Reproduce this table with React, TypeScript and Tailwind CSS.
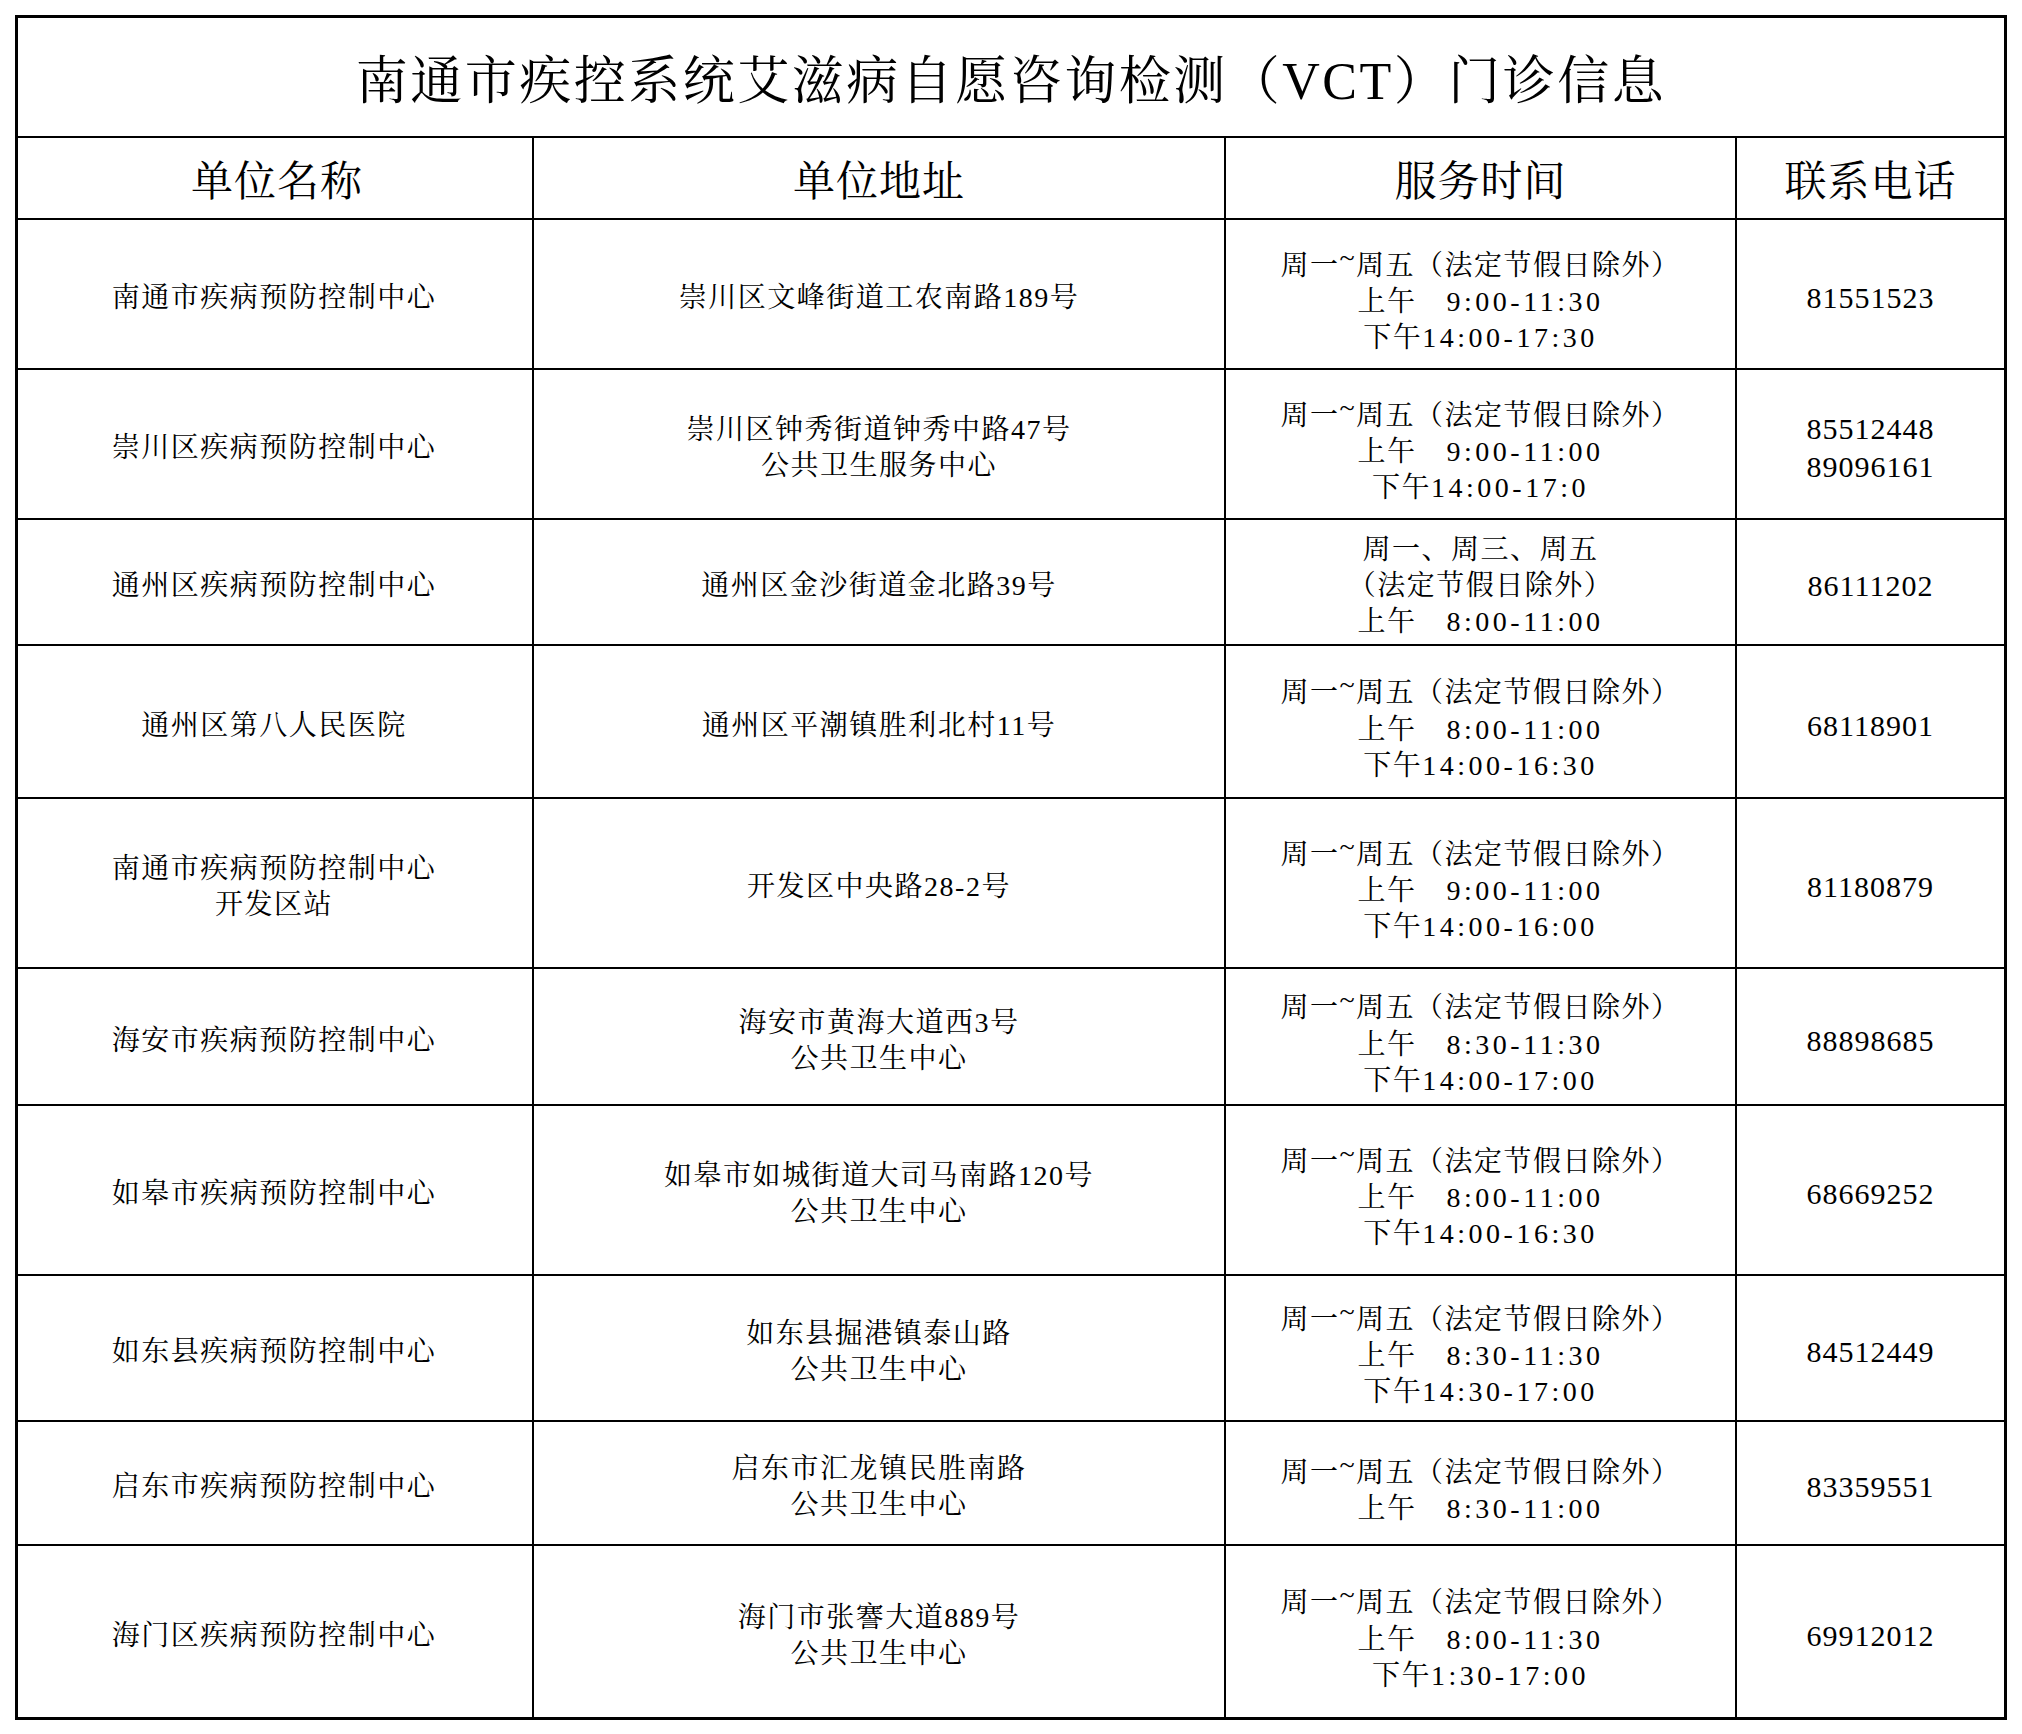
import React from "react";

type Row = {
  name: string[];
  addr: string[];
  days?: string[];
  am: string;
  pm?: string;
  phone: string[];
  h: string;
  last?: boolean;
};

const rows: Row[] = [
  { name: ["南通市疾病预防控制中心"], addr: ["崇川区文峰街道工农南路189号"], am: "9:00-11:30", pm: "14:00-17:30", phone: ["81551523"], h: "h-[150px]" },
  { name: ["崇川区疾病预防控制中心"], addr: ["崇川区钟秀街道钟秀中路47号", "公共卫生服务中心"], am: "9:00-11:00", pm: "14:00-17:0", phone: ["85512448", "89096161"], h: "h-[150px]" },
  { name: ["通州区疾病预防控制中心"], addr: ["通州区金沙街道金北路39号"], days: ["周一、周三、周五", "（法定节假日除外）"], am: "8:00-11:00", phone: ["86111202"], h: "h-[126px]" },
  { name: ["通州区第八人民医院"], addr: ["通州区平潮镇胜利北村11号"], am: "8:00-11:00", pm: "14:00-16:30", phone: ["68118901"], h: "h-[153px]" },
  { name: ["南通市疾病预防控制中心", "开发区站"], addr: ["开发区中央路28-2号"], am: "9:00-11:00", pm: "14:00-16:00", phone: ["81180879"], h: "h-[170px]" },
  { name: ["海安市疾病预防控制中心"], addr: ["海安市黄海大道西3号", "公共卫生中心"], am: "8:30-11:30", pm: "14:00-17:00", phone: ["88898685"], h: "h-[137px]" },
  { name: ["如皋市疾病预防控制中心"], addr: ["如皋市如城街道大司马南路120号", "公共卫生中心"], am: "8:00-11:00", pm: "14:00-16:30", phone: ["68669252"], h: "h-[170px]" },
  { name: ["如东县疾病预防控制中心"], addr: ["如东县掘港镇泰山路", "公共卫生中心"], am: "8:30-11:30", pm: "14:30-17:00", phone: ["84512449"], h: "h-[146px]" },
  { name: ["启东市疾病预防控制中心"], addr: ["启东市汇龙镇民胜南路", "公共卫生中心"], am: "8:30-11:00", phone: ["83359551"], h: "h-[124px]" },
  { name: ["海门区疾病预防控制中心"], addr: ["海门市张謇大道889号", "公共卫生中心"], am: "8:00-11:30", pm: "1:30-17:00", phone: ["69912012"], h: "h-[171px]", last: true },
];

const font = "font-['Liberation_Serif','Noto_Serif_CJK_SC','Noto_Sans_CJK_SC',serif]";

const Lines = ({ items }: { items: string[] }) => (
  <>
    {items.map((t) => (
      <div key={t}>{t}</div>
    ))}
  </>
);

const Week = () => (
  <div>
    周一<span className="align-[0.3em]">~</span>周五（法定节假日除外）
  </div>
);

export default function App() {
  return (
    <div className={`min-h-screen bg-white text-black ${font}`}>
      <div className="pl-[15px] pt-[15px]">
        <div className="w-[1992px] border-[3px] border-black">
          <div className="h-[120px] border-b-2 border-black flex items-center justify-center text-[52px] tracking-[2.5px] pt-[9px]">
            南通市疾控系统艾滋病自愿咨询检测（VCT）门诊信息
          </div>

          <div className="h-[82px] border-b-2 border-black flex text-[42px] tracking-[1px]">
            <div className="w-[516px] border-r-2 border-black flex items-center justify-center pl-[4px] pt-[8px]">单位名称</div>
            <div className="w-[692px] border-r-2 border-black flex items-center justify-center pt-[8px]">单位地址</div>
            <div className="w-[511px] border-r-2 border-black flex items-center justify-center pt-[8px]">服务时间</div>
            <div className="w-[267px] flex items-center justify-center pt-[8px]">联系电话</div>
          </div>

          {rows.map((r, i) => (
            <div
              key={i}
              className={`${r.h} ${r.last ? "" : "border-b-2 border-black"} flex text-[28px] tracking-[1.5px] leading-[36px] text-center`}
            >
              <div className="w-[516px] border-r-2 border-black flex flex-col items-center justify-center pr-[2px] pt-[8px]">
                <Lines items={r.name} />
              </div>
              <div className="w-[692px] border-r-2 border-black flex flex-col items-center justify-center pt-[8px]">
                <Lines items={r.addr} />
              </div>
              <div className="w-[511px] border-r-2 border-black flex flex-col items-center justify-center pt-[8px]">
                {r.days ? <Lines items={r.days} /> : <Week />}
                <div>
                  上午<span className="inline-block w-[30px]" />
                  <span className="tracking-[3.5px]">{r.am}</span>
                </div>
                {r.pm && (
                  <div>
                    下午<span className="tracking-[3.5px]">{r.pm}</span>
                  </div>
                )}
              </div>
              <div className="w-[267px] flex flex-col items-center justify-center text-[30px] tracking-[1px] leading-[38px] pt-[8px]">
                <Lines items={r.phone} />
              </div>
            </div>
          ))}
        </div>
      </div>
    </div>
  );
}
